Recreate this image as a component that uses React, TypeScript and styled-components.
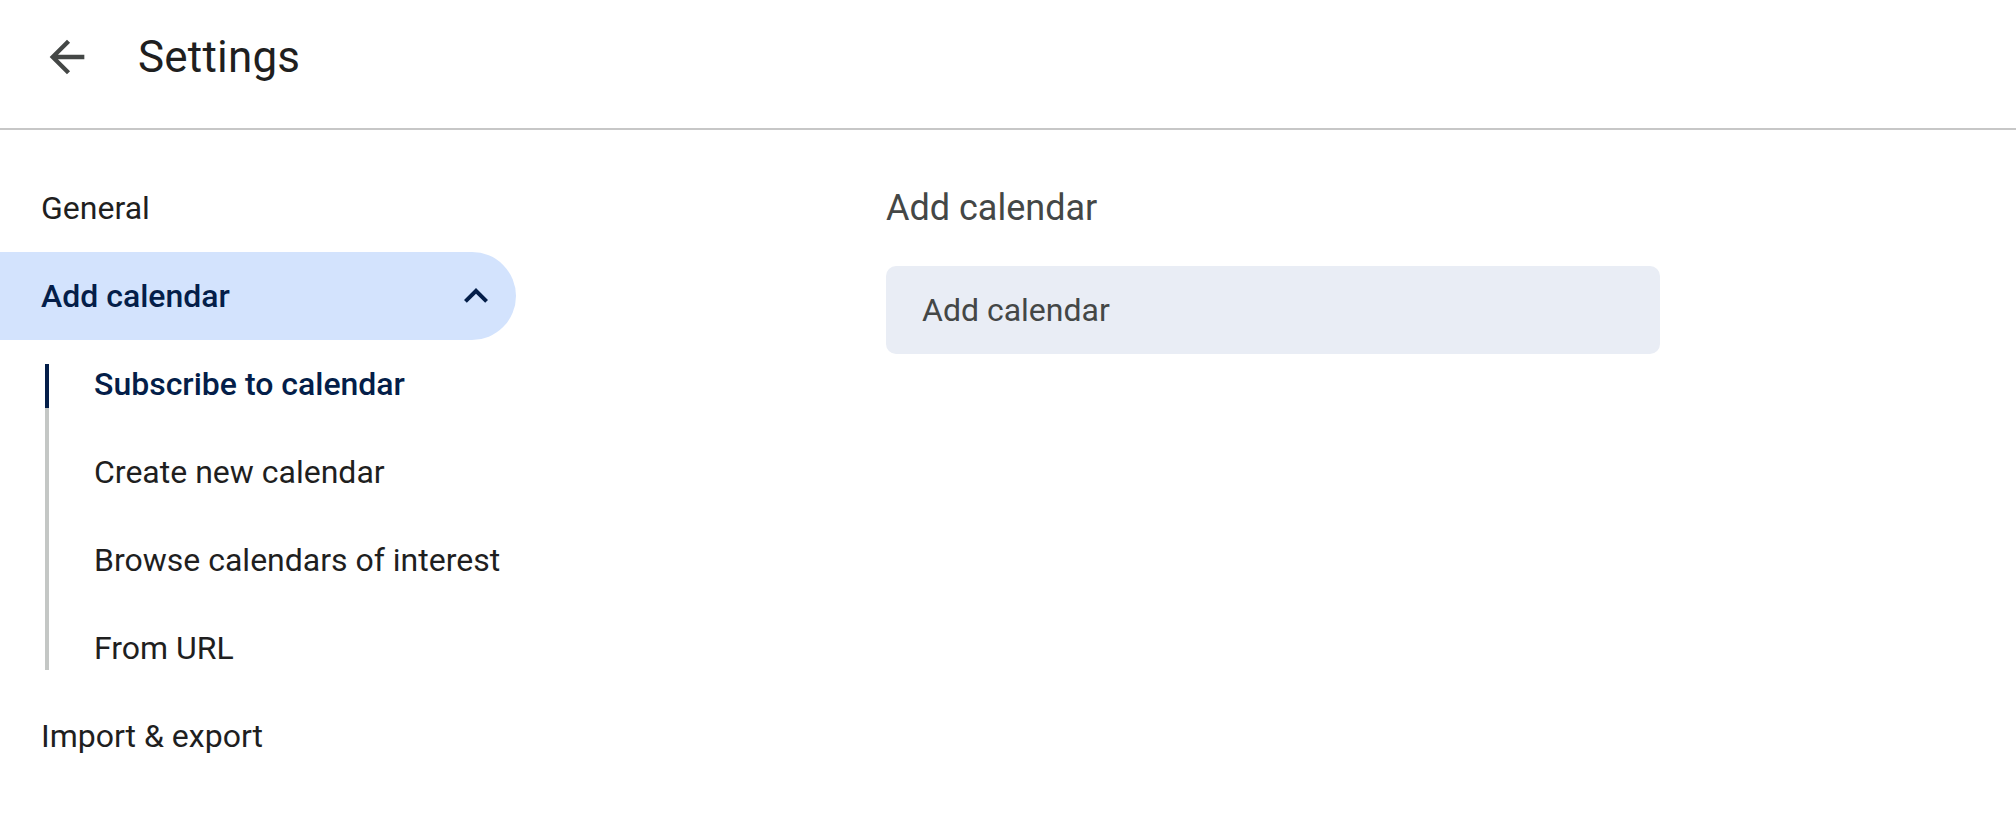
import React from 'react';
import styled, { createGlobalStyle } from 'styled-components';

const GlobalStyle = createGlobalStyle`
  html, body {
    margin: 0;
    padding: 0;
    background: #ffffff;
    font-family: Roboto, "Liberation Sans", Arial, sans-serif;
    color: #1f1f1f;
  }
`;

const Page = styled.div`
  width: 2016px;
  height: 820px;
  overflow: hidden;
  display: flex;
  flex-direction: column;
`;

const Header = styled.header`
  height: 130px;
  flex-shrink: 0;
  display: flex;
  align-items: center;
  padding: 0 0 14px 41px;
  box-sizing: border-box;
  border-bottom: 2px solid #c7c7c7;
  gap: 45px;
`;

const BackButton = styled.button`
  width: 52px;
  height: 52px;
  padding: 0;
  border: none;
  background: none;
  display: flex;
  align-items: center;
  justify-content: center;
  color: #444746;
  cursor: pointer;
`;

const Title = styled.h1`
  margin: 0;
  font-size: 44px;
  font-weight: 400;
  color: #1f1f1f;
  letter-spacing: 0.2px;
`;

const Body = styled.div`
  flex: 1;
  display: flex;
  padding-top: 34px;
`;

const Nav = styled.nav`
  width: 516px;
  flex-shrink: 0;
  display: flex;
  flex-direction: column;
`;

const NavItem = styled.div<{ $active?: boolean }>`
  height: 88px;
  display: flex;
  align-items: center;
  justify-content: space-between;
  padding: 0 16px 0 41px;
  font-size: 32px;
  font-weight: ${(p) => (p.$active ? 500 : 400)};
  color: ${(p) => (p.$active ? '#041e49' : '#1f1f1f')};
  background: ${(p) => (p.$active ? '#d3e3fd' : 'transparent')};
  border-radius: 0 44px 44px 0;
`;

const SubList = styled.div`
  position: relative;
  display: flex;
  flex-direction: column;
  margin-left: 45px;
`;

const Rail = styled.div`
  position: absolute;
  left: 0;
  top: 24px;
  bottom: 22px;
  width: 4px;
  background: #c4c7c5;
`;

const SubItem = styled.div<{ $active?: boolean }>`
  position: relative;
  height: 88px;
  display: flex;
  align-items: center;
  padding-left: 49px;
  font-size: 32px;
  font-weight: ${(p) => (p.$active ? 500 : 400)};
  color: ${(p) => (p.$active ? '#041e49' : '#1f1f1f')};

  &::before {
    content: '';
    display: ${(p) => (p.$active ? 'block' : 'none')};
    position: absolute;
    left: 0;
    top: 24px;
    width: 4px;
    height: 44px;
    background: #041e49;
  }
`;

const Content = styled.main`
  flex: 1;
  display: flex;
  flex-direction: column;
  padding-left: 370px;
`;

const SectionTitle = styled.h2`
  margin: 0;
  height: 88px;
  display: flex;
  align-items: center;
  font-size: 36px;
  font-weight: 400;
  color: #444746;
`;

const Field = styled.div`
  width: 774px;
  height: 88px;
  margin-top: 14px;
  box-sizing: border-box;
  display: flex;
  align-items: center;
  padding-left: 36px;
  background: #e9edf5;
  border-radius: 10px;
  font-size: 32px;
  color: #444746;
`;

const BackIcon = () => (
  <svg width="52" height="52" viewBox="0 0 24 24" fill="currentColor">
    <path d="M20 11H7.83l5.59-5.59L12 4l-8 8 8 8 1.41-1.41L7.83 13H20v-2z" />
  </svg>
);

const ChevronUp = () => (
  <svg width="48" height="48" viewBox="0 0 24 24" fill="#041e49">
    <path d="M12 8l-6 6 1.41 1.41L12 10.83l4.59 4.58L18 14z" />
  </svg>
);

const subItems = [
  'Subscribe to calendar',
  'Create new calendar',
  'Browse calendars of interest',
  'From URL',
];

export default function App() {
  return (
    <Page>
      <GlobalStyle />
      <Header>
        <BackButton aria-label="Back">
          <BackIcon />
        </BackButton>
        <Title>Settings</Title>
      </Header>
      <Body>
        <Nav>
          <NavItem>General</NavItem>
          <NavItem $active>
            Add calendar
            <ChevronUp />
          </NavItem>
          <SubList>
            <Rail />
            {subItems.map((label, i) => (
              <SubItem key={label} $active={i === 0}>
                {label}
              </SubItem>
            ))}
          </SubList>
          <NavItem>Import &amp; export</NavItem>
        </Nav>
        <Content>
          <SectionTitle>Add calendar</SectionTitle>
          <Field>Add calendar</Field>
        </Content>
      </Body>
    </Page>
  );
}
